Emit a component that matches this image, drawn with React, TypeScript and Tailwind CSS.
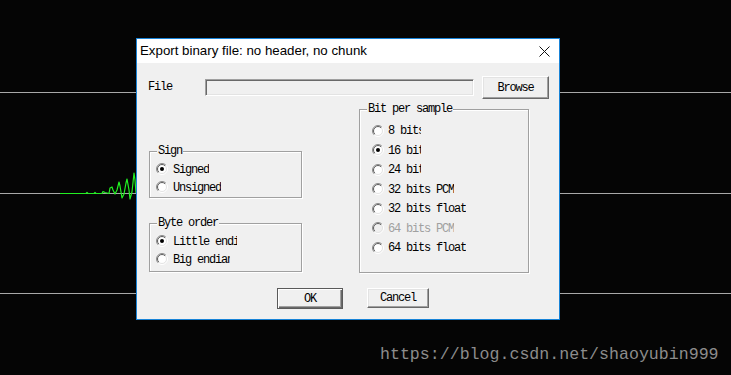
import React from "react";

const mono = "font-['Liberation_Mono',monospace] text-[12px] tracking-[-1.2px] leading-none";

function Radio({ checked = false, disabled = false }: { checked?: boolean; disabled?: boolean }) {
  return (
    <svg width="12" height="12" viewBox="0 0 12 12" className="shrink-0">
      <defs>
        <linearGradient id="rgo" x1="0" y1="0" x2="1" y2="1">
          <stop offset="0.45" stopColor="#8a8a8a" />
          <stop offset="0.55" stopColor="#ffffff" />
        </linearGradient>
        <linearGradient id="rgi" x1="0" y1="0" x2="1" y2="1">
          <stop offset="0.45" stopColor="#5a5a5a" />
          <stop offset="0.55" stopColor="#e3e3e3" />
        </linearGradient>
      </defs>
      <circle cx="6" cy="6" r="5.5" fill="none" stroke="url(#rgo)" strokeWidth="1" />
      <circle cx="6" cy="6" r="4.5" fill={disabled ? "#f0f0f0" : "#ffffff"} stroke="url(#rgi)" strokeWidth="1" />
      {checked && <circle cx="6" cy="6" r="2" fill="#000" />}
    </svg>
  );
}

function RadioRow({
  label,
  checked,
  disabled,
  clip,
  h,
  iconMl,
  gap,
}: {
  label: string;
  checked?: boolean;
  disabled?: boolean;
  clip?: string;
  h: string;
  iconMl: string;
  gap: string;
}) {
  return (
    <div className={`flex items-center ${h}`}>
      <div className={iconMl}>
        <Radio checked={checked} disabled={disabled} />
      </div>
      <div className={`${gap} ${clip ?? ""} overflow-hidden whitespace-nowrap pt-[1px] ${mono} ${disabled ? "text-[#a0a0a0]" : "text-black"}`}>
        {label}
      </div>
    </div>
  );
}

function Group({ title, className, children }: { title: string; className: string; children: React.ReactNode }) {
  return (
    <div className={`relative border border-[#a0a0a0] shadow-[1px_1px_0_#ffffff,inset_1px_1px_0_#ffffff] ${className}`}>
      <span className={`absolute left-[7px] top-[-7px] bg-[#f0f0f0] px-[1px] text-black ${mono}`}>{title}</span>
      {children}
    </div>
  );
}

function Button({ label, def, className }: { label: string; def?: boolean; className: string }) {
  return (
    <div
      className={`flex items-center justify-center bg-[#f0f0f0] text-black ${mono} ${className} ${
        def
          ? "border border-[#5a5a5a] shadow-[inset_1px_1px_0_#ffffff,inset_-1px_-1px_0_#696969,inset_-2px_-2px_0_#a0a0a0]"
          : "border border-t-white border-l-white border-b-[#696969] border-r-[#696969] shadow-[inset_-1px_-1px_0_#a0a0a0,inset_1px_1px_0_#e3e3e3]"
      }`}
    >
      {label}
    </div>
  );
}

export default function App() {
  const wave =
    "60,193.5 86,193.5 87,192.5 88,193.5 94,193.5 95,192.5 96,193.5 102,193.5 103,191.5 105,192.5 109,193.5 110,188 112,187 113,190 115,194 117,190 119,182 120,186 122,198 124,194 126,183 127,179 129,190 130,199 132,192 134,173 135,180 136,193";
  return (
    <div className="relative w-[731px] h-[375px] overflow-hidden bg-[#050505]">
      <svg className="absolute inset-0" width="731" height="375" viewBox="0 0 731 375">
        <line x1="0" y1="92.5" x2="731" y2="92.5" stroke="#a8a8a8" strokeWidth="1" />
        <line x1="0" y1="193.5" x2="731" y2="193.5" stroke="#a8a8a8" strokeWidth="1" />
        <line x1="0" y1="293.5" x2="731" y2="293.5" stroke="#a8a8a8" strokeWidth="1" />
        <polyline points={wave} fill="none" stroke="#22f022" strokeWidth="1.2" strokeLinejoin="round" />
      </svg>

      {/* dialog window */}
      <div className="absolute left-[136px] top-[38px] w-[424px] h-[282px] border border-[#1883d7] flex flex-col">
        <div className="h-[24px] bg-white flex items-center justify-between pl-[3px] pr-[9px]">
          <span className="font-['Liberation_Sans',sans-serif] text-[13.3px] text-black">
            Export binary file: no header, no chunk
          </span>
          <svg width="11" height="11" viewBox="0 0 11 11">
            <path d="M0.5 0.5 L10.5 10.5 M10.5 0.5 L0.5 10.5" stroke="#111" strokeWidth="1" />
          </svg>
        </div>

        <div className="flex-1 bg-[#f0f0f0] flex flex-col">
          {/* File row */}
          <div className="flex items-center h-[23px] mt-[13px]">
            <div className={`w-[68px] pl-[11px] pb-[2px] text-black ${mono}`}>File</div>
            <div className="w-[269px] h-[17px] bg-[#f0f0f0] border border-t-[#a0a0a0] border-l-[#a0a0a0] border-b-white border-r-white shadow-[inset_1px_1px_0_#696969,inset_-1px_-1px_0_#e3e3e3]" />
            <Button label="Browse" className="ml-[8px] w-[67px] h-[23px]" />
          </div>

          {/* groups */}
          <div className="flex mt-[10px]">
            <div className="flex flex-col ml-[12px] pt-[42px] w-[153px] gap-[25px]">
              <Group title="Sign" className="h-[47px] pt-[8px]">
                <RadioRow label="Signed" checked h="h-[18px]" iconMl="ml-[6px]" gap="ml-[5px]" />
                <RadioRow label="Unsigned" h="h-[18px]" iconMl="ml-[6px]" gap="ml-[5px]" />
              </Group>
              <Group title="Byte order" className="h-[49px] pt-[8px]">
                <RadioRow label="Little endian" checked clip="w-[64px]" h="h-[18px]" iconMl="ml-[6px]" gap="ml-[5px]" />
                <RadioRow label="Big endian" clip="w-[57px]" h="h-[18px]" iconMl="ml-[6px]" gap="ml-[5px]" />
              </Group>
            </div>
            <Group title="Bit per sample" className="ml-[57px] w-[170px] h-[164px] pt-[11px]">
              <RadioRow label="8 bits" clip="w-[33px]" h="h-[19.5px]" iconMl="ml-[12px]" gap="ml-[4px]" />
              <RadioRow label="16 bits" checked clip="w-[33px]" h="h-[19.5px]" iconMl="ml-[12px]" gap="ml-[4px]" />
              <RadioRow label="24 bits" clip="w-[33px]" h="h-[19.5px]" iconMl="ml-[12px]" gap="ml-[4px]" />
              <RadioRow label="32 bits PCM" h="h-[19.5px]" iconMl="ml-[12px]" gap="ml-[4px]" />
              <RadioRow label="32 bits float" h="h-[19.5px]" iconMl="ml-[12px]" gap="ml-[4px]" />
              <RadioRow label="64 bits PCM" disabled h="h-[19.5px]" iconMl="ml-[12px]" gap="ml-[4px]" />
              <RadioRow label="64 bits float" h="h-[19.5px]" iconMl="ml-[12px]" gap="ml-[4px]" />
            </Group>
          </div>

          {/* buttons */}
          <div className="flex mt-[15px] pl-[140px] gap-[24px] items-start">
            <Button label="OK" def className="w-[66px] h-[21px]" />
            <Button label="Cancel" className="w-[62px] h-[20px]" />
          </div>
        </div>
      </div>

      <div className="absolute left-[380px] top-[345px] font-['Liberation_Mono',monospace] text-[16.6px] leading-[20px] text-[#8c8c8c] whitespace-nowrap">
        https://blog.csdn.net/shaoyubin999
      </div>
    </div>
  );
}
